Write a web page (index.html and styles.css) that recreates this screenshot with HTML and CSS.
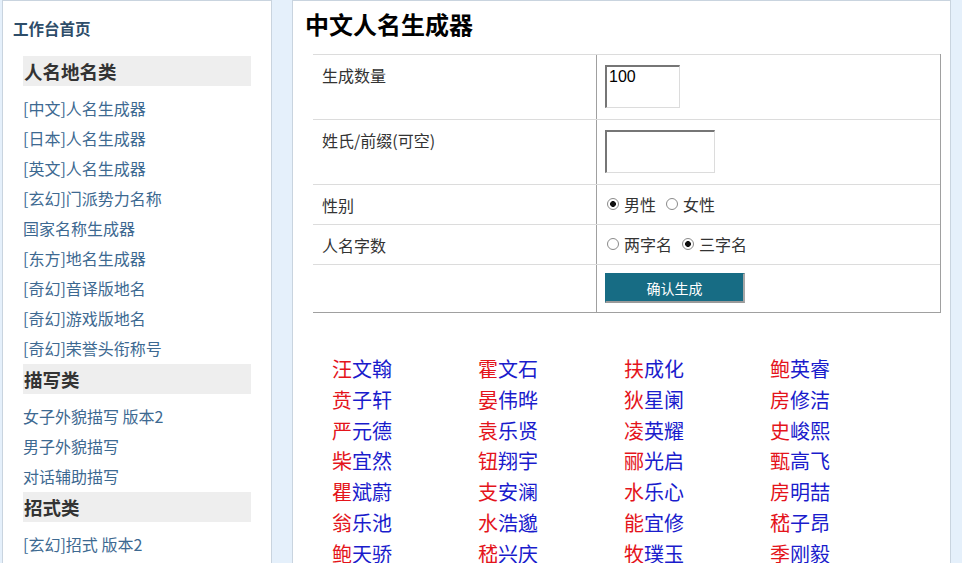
FILE: index.html
```html
<!DOCTYPE html>
<html lang="zh-CN">
<head>
<meta charset="utf-8">
<title>中文人名生成器</title>
<link rel="stylesheet" href="styles.css">
</head>
<body>
<div class="page">
  <aside class="sidebar">
    <a class="home" href="#">工作台首页</a>
    <div class="menu">
      <div class="group-title">人名地名类</div>
      <a class="item" href="#">[中文]人名生成器</a>
      <a class="item" href="#">[日本]人名生成器</a>
      <a class="item" href="#">[英文]人名生成器</a>
      <a class="item" href="#">[玄幻]门派势力名称</a>
      <a class="item" href="#">国家名称生成器</a>
      <a class="item" href="#">[东方]地名生成器</a>
      <a class="item" href="#">[奇幻]音译版地名</a>
      <a class="item" href="#">[奇幻]游戏版地名</a>
      <a class="item" href="#">[奇幻]荣誉头衔称号</a>
      <div class="group-title">描写类</div>
      <a class="item" href="#">女子外貌描写 版本2</a>
      <a class="item" href="#">男子外貌描写</a>
      <a class="item" href="#">对话辅助描写</a>
      <div class="group-title">招式类</div>
      <a class="item" href="#">[玄幻]招式 版本2</a>
    </div>
  </aside>
  <main class="main">
    <h1 class="title">中文人名生成器</h1>
    <div class="form">
      <div class="row row-tall">
        <div class="label">生成数量</div>
        <div class="field"><textarea class="box box-num">100</textarea></div>
      </div>
      <div class="row row-tall">
        <div class="label">姓氏/前缀(可空)</div>
        <div class="field"><textarea class="box box-prefix"></textarea></div>
      </div>
      <div class="row row-short">
        <div class="label">性别</div>
        <div class="field field-radio">
          <label class="opt"><input type="radio" name="sex" checked>男性</label>
          <label class="opt"><input type="radio" name="sex">女性</label>
        </div>
      </div>
      <div class="row row-short">
        <div class="label">人名字数</div>
        <div class="field field-radio">
          <label class="opt"><input type="radio" name="len">两字名</label>
          <label class="opt"><input type="radio" name="len" checked>三字名</label>
        </div>
      </div>
      <div class="row row-btn">
        <div class="label"></div>
        <div class="field field-btn"><button class="submit" type="button">确认生成</button></div>
      </div>
    </div>
    <div class="names">
      <span class="name"><span class="sur">汪</span>文翰</span>
      <span class="name"><span class="sur">霍</span>文石</span>
      <span class="name"><span class="sur">扶</span>成化</span>
      <span class="name"><span class="sur">鲍</span>英睿</span>
      <span class="name"><span class="sur">贲</span>子轩</span>
      <span class="name"><span class="sur">晏</span>伟晔</span>
      <span class="name"><span class="sur">狄</span>星阑</span>
      <span class="name"><span class="sur">房</span>修洁</span>
      <span class="name"><span class="sur">严</span>元德</span>
      <span class="name"><span class="sur">袁</span>乐贤</span>
      <span class="name"><span class="sur">凌</span>英耀</span>
      <span class="name"><span class="sur">史</span>峻熙</span>
      <span class="name"><span class="sur">柴</span>宜然</span>
      <span class="name"><span class="sur">钮</span>翔宇</span>
      <span class="name"><span class="sur">郦</span>光启</span>
      <span class="name"><span class="sur">甄</span>高飞</span>
      <span class="name"><span class="sur">瞿</span>斌蔚</span>
      <span class="name"><span class="sur">支</span>安澜</span>
      <span class="name"><span class="sur">水</span>乐心</span>
      <span class="name"><span class="sur">房</span>明喆</span>
      <span class="name"><span class="sur">翁</span>乐池</span>
      <span class="name"><span class="sur">水</span>浩邈</span>
      <span class="name"><span class="sur">能</span>宜修</span>
      <span class="name"><span class="sur">嵇</span>子昂</span>
      <span class="name"><span class="sur">鲍</span>天骄</span>
      <span class="name"><span class="sur">嵇</span>兴庆</span>
      <span class="name"><span class="sur">牧</span>璞玉</span>
      <span class="name"><span class="sur">季</span>刚毅</span>
    </div>
  </main>
</div>
</body>
</html>
```

FILE: styles.css
```css
html, body {
  margin: 0;
  padding: 0;
  height: 563px;
  overflow: hidden;
}
body {
  background: #e5f0fb;
  font-family: "Noto Sans CJK SC", "Noto Sans", sans-serif;
  color: #333;
}
.page {
  display: flex;
  align-items: flex-start;
  gap: 20px;
  padding-left: 2px;
}
.sidebar {
  box-sizing: border-box;
  width: 270px;
  height: 640px;
  background: #fff;
  border: 1px solid #c9d4df;
  display: flex;
  flex-direction: column;
}
.home {
  margin: 15px 0 0 10px;
  font-size: 15.5px;
  line-height: 24px;
  font-weight: bold;
  color: #2e4d69;
  text-decoration: none;
}
.menu {
  margin: 15px 0 0 20px;
  width: 228px;
  display: flex;
  flex-direction: column;
}
.group-title {
  margin: 1px 0 7px;
  height: 30px;
  line-height: 30px;
  padding-left: 1px;
  background: #eeeeee;
  font-size: 18.5px;
  font-weight: bold;
  color: #333;
}
.item {
  line-height: 30px;
  font-size: 16px;
  color: #3d6991;
  text-decoration: none;
  white-space: nowrap;
}
.main {
  box-sizing: border-box;
  width: 659px;
  height: 640px;
  background: #fff;
  border: 1px solid #c9d4df;
}
.title {
  margin: 7px 0 0 12px;
  font-size: 24px;
  line-height: 32px;
  font-weight: bold;
  color: #000;
}
.form {
  margin: 14px 0 0 20px;
  width: 628px;
  box-sizing: border-box;
  border-bottom: 1px solid #a0a0a0;
  border-right: 1px solid #a0a0a0;
}
.row {
  display: grid;
  grid-template-columns: 283px 1fr;
  border-top: 1px solid #dcdcdc;
}
.row-tall { height: 64px; }
.row-short { height: 39px; }
.row-btn { height: 47px; }
.label {
  padding: 9px 0 0 9px;
  font-size: 16px;
  line-height: 22px;
  color: #333;
}
.field {
  border-left: 1px solid #a0a0a0;
  padding: 10px 0 0 8px;
}
.field-radio {
  display: flex;
  align-items: center;
  align-self: stretch;
  padding-top: 0;
  padding-bottom: 1px;
}
.field-btn { padding-top: 8px; }
.box {
  display: block;
  box-sizing: border-box;
  height: 43px;
  margin: 0;
  padding: 1px 2px;
  resize: none;
  background: #fff;
  border-top: 2px solid #767676;
  border-left: 2px solid #767676;
  border-right: 1px solid #dcdcdc;
  border-bottom: 1px solid #dcdcdc;
  font-family: "Liberation Sans", Arial, sans-serif;
  font-size: 16px;
  line-height: 18px;
  color: #000;
  overflow: hidden;
}
.box-num { width: 75px; }
.box-prefix { width: 110px; }
.opt {
  display: flex;
  align-items: center;
  font-size: 16px;
  line-height: 22px;
  color: #333;
  margin-right: 8px;
}
.opt input {
  appearance: none;
  -webkit-appearance: none;
  box-sizing: border-box;
  width: 12px;
  height: 12px;
  margin: 0 5px 0 2px;
  border: 1px solid #8a8a8a;
  border-radius: 50%;
  background: #fff;
}
.opt input:checked {
  background: radial-gradient(circle, #111 0 2.6px, #fff 3.2px);
}
.submit {
  display: block;
  box-sizing: border-box;
  width: 140px;
  height: 30px;
  margin: 0;
  padding: 0;
  background: #176c84;
  color: #fff;
  font-family: "Noto Sans CJK SC", sans-serif;
  font-size: 14px;
  line-height: 26px;
  border: 1px solid #176c84;
  border-right: 2px solid #a7a7a7;
  border-bottom: 2px solid #9a9a9a;
}
.names {
  margin: 41px 0 0 39px;
  display: grid;
  grid-template-columns: repeat(4, 146px);
  font-size: 20px;
  line-height: 30.8px;
}
.name {
  color: #1a1ccc;
  white-space: nowrap;
}
.sur {
  color: #e4141b;
}
```
